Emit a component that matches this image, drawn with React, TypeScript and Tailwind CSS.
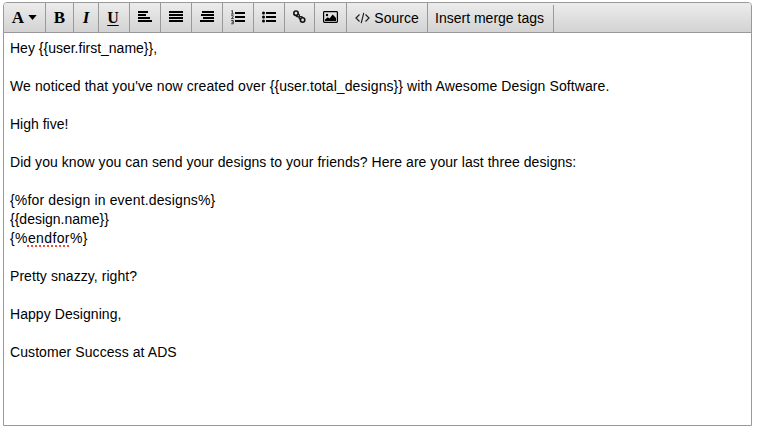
import type { ReactNode } from "react";

const lines: { text: string; tracking: string }[] = [
  { text: "Hey {{user.first_name}},", tracking: "" },
  { text: "", tracking: "" },
  { text: "We noticed that you've now created over {{user.total_designs}} with Awesome Design Software.", tracking: "tracking-[0.088px]" },
  { text: "", tracking: "" },
  { text: "High five!", tracking: "" },
  { text: "", tracking: "" },
  { text: "Did you know you can send your designs to your friends? Here are your last three designs:", tracking: "tracking-[0.05px]" },
  { text: "", tracking: "" },
  { text: "{%for design in event.designs%}", tracking: "tracking-[0.15px]" },
  { text: "{{design.name}}", tracking: "" },
  { text: "{%endfor%}", tracking: "tracking-[0.38px]" },
  { text: "", tracking: "" },
  { text: "Pretty snazzy, right?", tracking: "tracking-[0.06px]" },
  { text: "", tracking: "" },
  { text: "Happy Designing,", tracking: "tracking-[0.06px]" },
  { text: "", tracking: "" },
  { text: "Customer Success at ADS", tracking: "tracking-[0.08px]" },
];

function ToolButton({ className, children }: { className: string; children: ReactNode }) {
  return (
    <button className={`flex h-[29px] shrink-0 items-center justify-center border-r border-[#999] ${className}`}>
      {children}
    </button>
  );
}

function Icon({ width = 16, children }: { width?: number; children: ReactNode }) {
  return (
    <svg width={width} height="15" viewBox={`0 0 ${width} 15`} className="shrink-0">
      {children}
    </svg>
  );
}

/* Four stacked bars; each entry is [x, width]. */
function Bars({ rows }: { rows: [number, number][] }) {
  return (
    <Icon>
      {rows.map(([x, w], i) => (
        <rect key={i} x={x} y={1 + i * 3} width={w} height="2" />
      ))}
    </Icon>
  );
}

export default function App() {
  return (
    <div className="h-[429px] w-[758px] bg-white pt-[2px] pl-[3px] font-['Liberation_Sans',Arial,sans-serif] text-black">
      <div className="flex h-[424px] w-[749px] flex-col overflow-hidden rounded-t-[4px] border border-[#999]">
        <div className="flex h-[30px] shrink-0 border-b border-[#999] bg-linear-to-b from-[#ececec] to-[#d3d3d3]">
          <ToolButton className="w-[42px] gap-[4px] font-['Liberation_Serif',serif] text-[17px] font-bold">
            <span>A</span>
            <svg width="9" height="5" viewBox="0 0 9 5"><path d="M0.3 0h8.4L4.5 5z" /></svg>
          </ToolButton>
          <ToolButton className="w-[28px] font-['Liberation_Serif',serif] text-[17px] font-bold">B</ToolButton>
          <ToolButton className="w-[25px] font-['Liberation_Serif',serif] text-[17px] font-bold italic">I</ToolButton>
          <ToolButton className="w-[31px] pr-[2px] font-['Liberation_Serif',serif] text-[16px] font-bold">
            <span className="underline decoration-1 underline-offset-2">U</span>
          </ToolButton>
          <ToolButton className="w-[31px]">
            <Bars rows={[[1, 10], [1, 8], [1, 12], [1, 14]]} />
          </ToolButton>
          <ToolButton className="w-[31px]">
            <Bars rows={[[1, 14], [1, 14], [1, 14], [1, 14]]} />
          </ToolButton>
          <ToolButton className="w-[31px]">
            <Bars rows={[[3, 12], [2, 13], [4, 11], [1, 14]]} />
          </ToolButton>
          <ToolButton className="w-[31px]">
            <Icon>
              <path d="M5 2h10v2H5zM5 6h10v2H5zM5 10h10v2H5z" />
              <path d="M1.2 1.2l1.2-.8v3.4M1 4h2.8M1.2 5.7h2v1.1L1.4 8.6h2.4M1.2 10.5h2.1v3.3H1.2M1.6 12.1h1.6" fill="none" stroke="#222" strokeWidth=".85" />
            </Icon>
          </ToolButton>
          <ToolButton className="w-[31px]">
            <Icon>
              <path d="M5 2h10v2H5zM5 6h10v2H5zM5 10h10v2H5z" />
              <circle cx="2.5" cy="3" r="1.5" /><circle cx="2.5" cy="7" r="1.5" /><circle cx="2.5" cy="11" r="1.5" />
            </Icon>
          </ToolButton>
          <ToolButton className="w-[30px]">
            <Icon width={15}>
              <g fill="none" stroke="#111" strokeWidth="1.6">
                <circle cx="4" cy="3.2" r="2.2" />
                <circle cx="10.6" cy="10" r="2.2" />
                <path d="M3.8 5.6c1.3 1.8 2.6 1.6 4.4 1.2M6 3.6c2 .8 1.6 2.2 1.2 4M8 6.8c1.4-.4 2.2 0 3 .8M6.9 6.3c-.4 1.6.4 2.4 1.4 3.4" strokeWidth="1.1" />
              </g>
            </Icon>
          </ToolButton>
          <ToolButton className="w-[32px]">
            <Icon width={15}>
              <rect x=".6" y="1.6" width="13.8" height="10.8" rx=".8" fill="none" stroke="black" strokeWidth="1.2" />
              <circle cx="4" cy="5" r="1.2" />
              <path d="M2 11V9.6l2.8-2.4 1.7 1.3 3.2-4L13 8v3z" />
            </Icon>
          </ToolButton>
          <ToolButton className="w-[81px] gap-[4px] text-[14px]">
            <svg width="15" height="12" viewBox="0 0 15 12" fill="none" stroke="#222" strokeWidth="1.2" className="shrink-0">
              <path d="M4.5 2.5L1 6l3.5 3.5M10.5 2.5L14 6l-3.5 3.5M8.8 .8L6.2 11.2" />
            </svg>
            <span className="relative top-px">Source</span>
          </ToolButton>
          <ToolButton className="mt-[2px] h-[27px] w-[126px] pr-[2px] pb-[2px] text-[14px] whitespace-nowrap">Insert merge tags</ToolButton>
        </div>
        <div className="flex-1 bg-white pt-[6px] pl-[6px] text-[14px] leading-[19px]">
          {lines.map(({ text, tracking }, i) => (
            <p key={i} className={`h-[19px] whitespace-pre ${tracking}`}>
              {text === "{%endfor%}" ? (
                <>
                  {"{%"}
                  <span className="underline decoration-[#f04a3e] decoration-dotted decoration-2 underline-offset-2">endfor</span>
                  {"%}"}
                </>
              ) : text}
            </p>
          ))}
        </div>
      </div>
    </div>
  );
}
